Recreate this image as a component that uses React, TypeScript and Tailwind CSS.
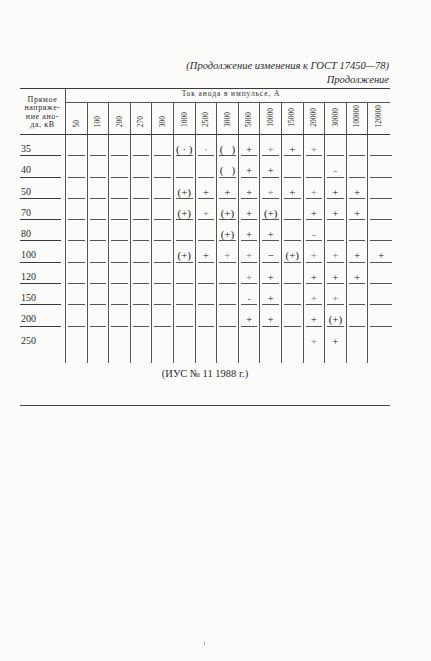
const cols = ["50", "100", "200", "270", "300", "1000", "2500", "3000", "5000", "10000", "15000", "20000", "30000", "100000", "120000"];

// marks per row: column index -> text; "~" prefix means faint print
const rows: { label: string; marks: Record<number, string> }[] = [
  { label: "35", marks: { 5: "( · )", 6: "~·", 7: "(   )", 8: "+", 9: "~+", 10: "+", 11: "~+" } },
  { label: "40", marks: { 7: "(   )", 8: "+", 9: "+", 12: "~-" } },
  { label: "50", marks: { 5: "(+)", 6: "+", 7: "+", 8: "+", 9: "~+", 10: "+", 11: "~+", 12: "+", 13: "+" } },
  { label: "70", marks: { 5: "(+)", 6: "~+", 7: "(+)", 8: "+", 9: "(+)", 11: "+", 12: "+", 13: "+" } },
  { label: "80", marks: { 7: "(+)", 8: "+", 9: "+", 11: "~-" } },
  { label: "100", marks: { 5: "(+)", 6: "+", 7: "~+", 8: "~+", 9: "−", 10: "(+)", 11: "~+", 12: "~+", 13: "+", 14: "+" } },
  { label: "120", marks: { 8: "~+", 9: "+", 11: "+", 12: "+", 13: "+" } },
  { label: "150", marks: { 8: "~-", 9: "+", 11: "~+", 12: "~+" } },
  { label: "200", marks: { 8: "+", 9: "+", 11: "+", 12: "(+)" } },
  { label: "250", marks: { 11: "~+", 12: "+" } },
];

function Mark({ text }: { text?: string }) {
  if (!text) return null;
  const faint = text.startsWith("~");
  const t = faint ? text.slice(1) : text;
  return (
    <span className={`whitespace-pre text-[11px] leading-[12px] ${faint ? "text-[#777]" : "text-[#222]"}`}>{t}</span>
  );
}

export default function App() {
  return (
    <div className="w-[431px] min-h-[661px] bg-[#fbfcfa] text-[#2a2a2a] font-['Liberation_Serif',serif]">
      {/* running head */}
      <div className="pt-[59px] pr-[42px] text-right italic text-[10.5px] leading-[14px]">
        <div>(Продолжение изменения к ГОСТ 17450—78)</div>
        <div>Продолжение</div>
      </div>

      <div className="ml-[20px] mt-[1px] w-[370px]">
        {/* header */}
        <div className="flex border-t-[1.5px] border-b border-[#3a3a3a] h-[47px]">
          <div className="w-[46px] shrink-0 border-r border-[#555] flex items-center justify-center text-center text-[8px] leading-[8.3px] tracking-[0.6px] pt-[2px]">
            <div>
              Прямое<br />напряже-<br />ние ано-<br />да, кВ
            </div>
          </div>
          <div className="flex-1 flex flex-col">
            <div className="h-[14px] border-b border-[#555] text-center pl-[6px] text-[7.5px] leading-[9px] tracking-[0.9px]">
              Ток анода в импульсе, А
            </div>
            <div className="flex-1 flex">
              {cols.map((c, i) => (
                <div
                  key={c}
                  className={`w-[21.6px] shrink-0 flex items-end justify-center pb-[7px] ${i < cols.length - 1 ? "border-r border-[#555]" : ""}`}
                >
                  <span className="[writing-mode:vertical-rl] rotate-180 text-[7.5px] leading-none">{c}</span>
                </div>
              ))}
            </div>
          </div>
        </div>

        {/* body */}
        {rows.map((r, ri) => {
          const last = ri === rows.length - 1;
          return (
            <div key={r.label} className={`flex ${last ? "h-[36px]" : "h-[21.3px]"}`}>
              <div className="w-[46px] shrink-0 border-r border-[#555]">
                <div className={`h-full mr-[4px] pt-[8px] text-[10px] leading-[12px] pl-[1px] ${last ? "" : "border-b border-[#3a3a3a]"}`}>
                  {r.label}
                </div>
              </div>
              {cols.map((c, i) => (
                <div key={c} className={`w-[21.6px] shrink-0 ${i < cols.length - 1 ? "border-r border-[#555]" : ""}`}>
                  <div
                    className={`h-full ${i < cols.length - 1 ? "mx-[2px]" : "ml-[2px] -mr-[2px]"} pt-[8px] flex justify-center ${last ? "" : "border-b border-[#555]"}`}
                  >
                    <Mark text={r.marks[i]} />
                  </div>
                </div>
              ))}
            </div>
          );
        })}

        <div className="mt-[5px] text-center text-[10.5px] leading-[12px]">(ИУС № 11 1988 г.)</div>
        <div className="mt-[25px] h-[1.5px] bg-[#444]" />
      </div>

      <div className="ml-[204px] mt-[236px] w-px h-[3px] bg-[#aaa]" />
    </div>
  );
}
